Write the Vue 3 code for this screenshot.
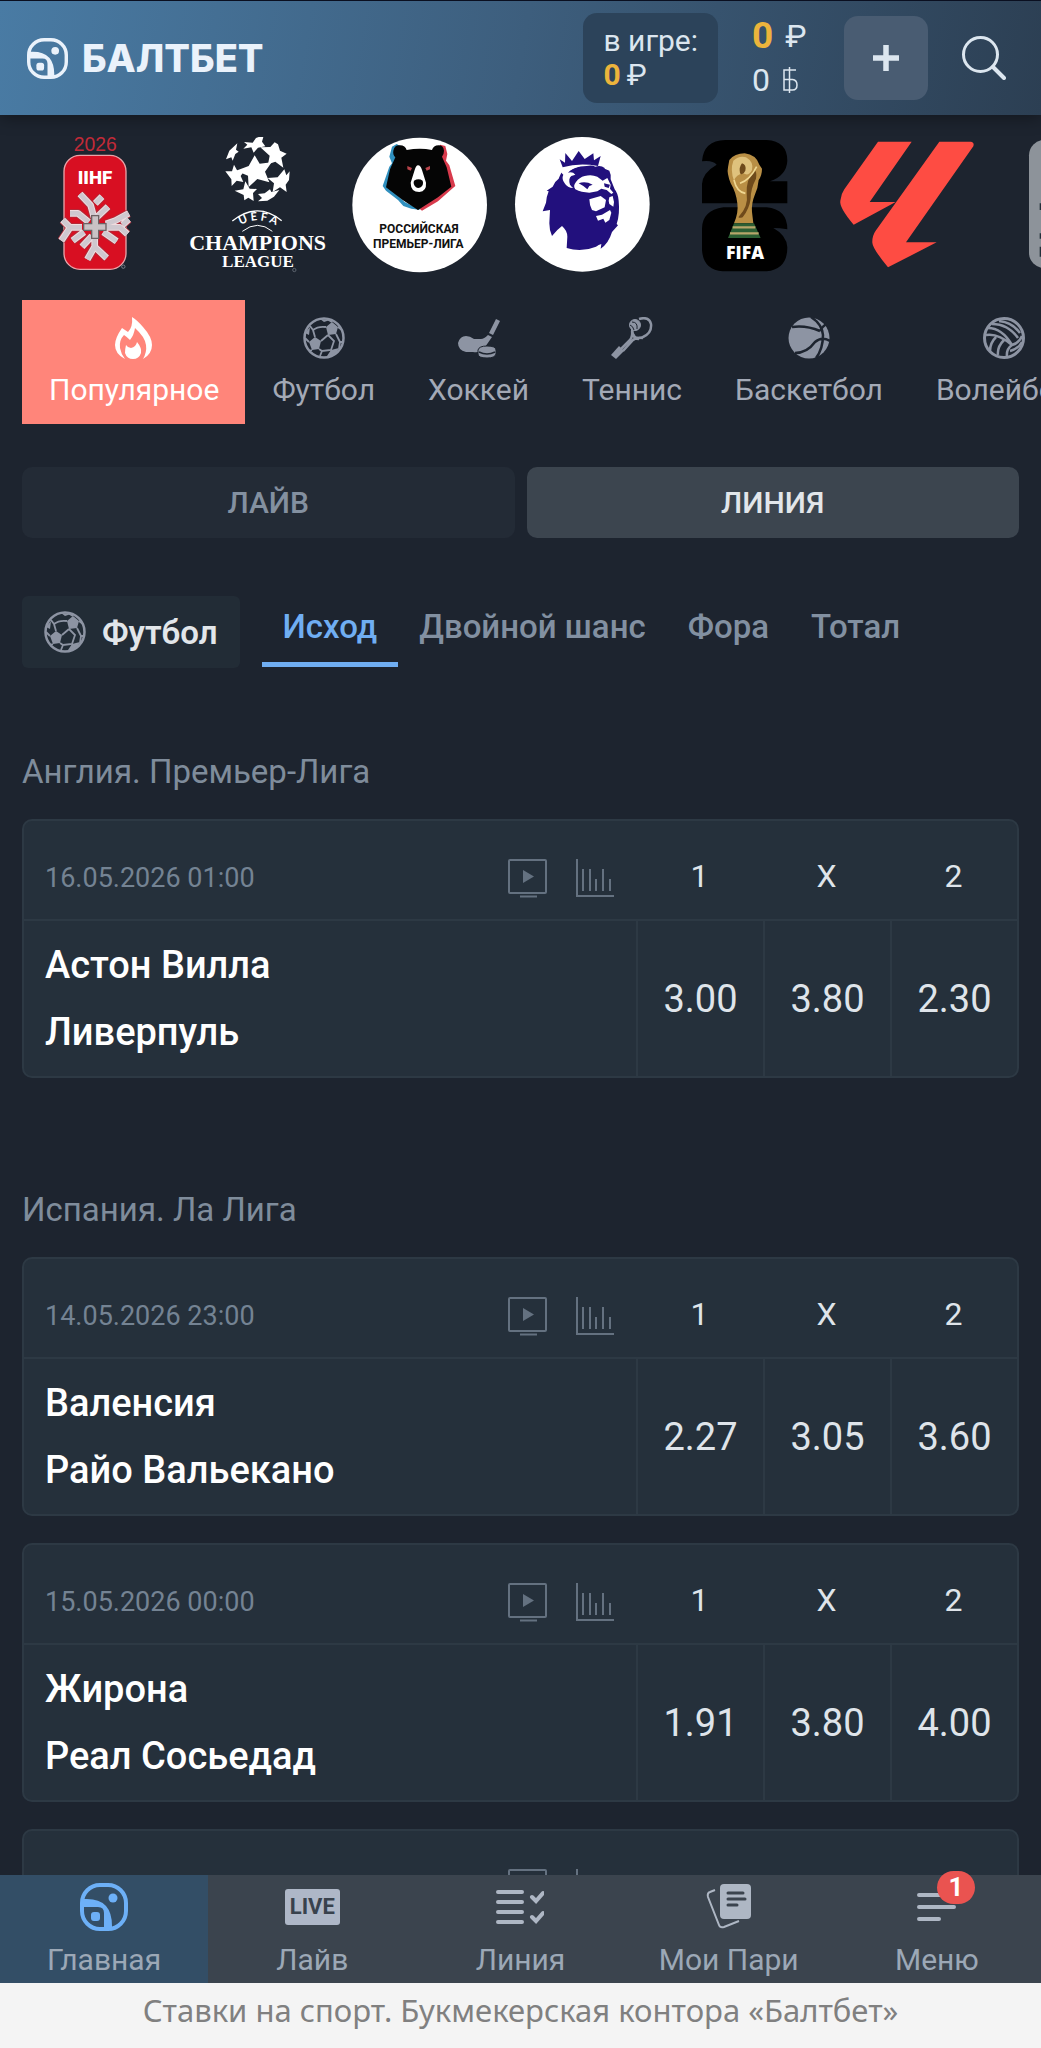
<template>
  <div class="app">
    <header class="header">
      <a href="#" class="brand">
        <svg class="brand-icon" viewBox="0 0 48 48">
          <use href="#balt-mark" />
        </svg>
        <span>БАЛТБЕТ</span>
      </a>
      <div class="in-play">
        <div>в игре:</div>
        <div class="in-play-sum"><b class="gold">0</b><span>₽</span></div>
      </div>
      <div class="balance">
        <div class="balance-row"><b class="gold">0</b><span>₽</span></div>
        <div class="balance-row">
          <span>0</span>
          <svg width="16" height="28" viewBox="0 0 16 28" fill="none" stroke="currentColor" stroke-width="1.500">
            <path d="M14 4H2v20h8.500q4.500 0 4.500-5t-4.500-5.500H2" />
            <path d="M7.500 1v26" />
          </svg>
        </div>
      </div>
      <button class="deposit" aria-label="Пополнить">
        <svg width="26" height="26" viewBox="0 0 26 26" stroke="currentColor" stroke-width="5.500">
          <path d="M13 0v26M0 13h26" />
        </svg>
      </button>
      <button class="search" aria-label="Поиск">
        <svg width="44" height="44" viewBox="0 0 44 44" fill="none" stroke="currentColor" stroke-width="3" stroke-linecap="round">
          <circle cx="18.500" cy="18.500" r="17" />
          <path d="M31 31l11 11" stroke-width="4" />
        </svg>
      </button>
    </header>

    <main class="content">
      <div class="leagues">
        <a href="#" class="league">
          <svg viewBox="84 51 405 408">
            <text x="286" y="94" font-size="58" font-weight="500" fill="#c22a38" text-anchor="middle" font-family="Liberation Sans, sans-serif">2026</text>
            <rect x="192" y="106" width="186" height="342" rx="48" fill="#d80f22" stroke="#e9a3a8" stroke-width="4" />
            <text x="285" y="191" font-size="56" font-weight="900" fill="#fff" text-anchor="middle" font-family="Roboto, sans-serif">IIHF</text>
            <defs>
              <path id="flake" d="M240 222l32 34 10 36M306 230l-20 20M210 280h24l32 26M324 260l-34 32M386 280l-40 22-28 10M188 300l22 22h36M184 362l24-36M382 342l-22-20h-44M386 298l-18 16M246 380l30-32M218 362l34-26M350 364l-40-28M284 350v30l-22 38M286 382l34 32" fill="none" stroke-linejoin="round" />
            </defs>
            <use href="#flake" stroke="#a83340" stroke-width="25" />
            <use href="#flake" stroke="#f0dcdf" stroke-width="20" />
            <use href="#flake" stroke="#cfc8cf" stroke-width="14" />
            <path d="M275 287h21v24h22v20h-22v24h-21v-24h-24v-20h24z" fill="#c9c2c5" stroke="#6d6264" stroke-width="4" />
            <circle cx="370" cy="440" r="5" fill="none" stroke="#777f8a" stroke-width="3" />
          </svg>
        </a>
        <a href="#" class="league">
          <svg viewBox="570 51 405 408">
            <g fill="#fff">
              <path d="M764 106l15 25 36-4-20 28 13 32-36-10-26 24-2-34-36-15 38-14z" />
              <path d="M732 66l26 2 10-14 8-3h14l-4 14 10 14-22 4-13 15-7-16-24 4 12-12z" />
              <path d="M781 82l30-1 13-14 10 6 6 19 20 9-16 12 6 30-24-18-22 8 5-26z" />
              <path d="M712 70l-24 22-10 26 16-6 4 10 8-20 10-7-8-6z" />
              <path d="M676 154l20 0 6-20 10 18 24-4-14 20 8 18-20-4-15 16-1-20z" />
              <path d="M803 174l30-2 20-24 6 18 10-12-2 26-10 14 3 22-20-14-22 14 4-26z" />
              <path d="M704 212l26-4 6-24 13 22 22 1-12 12 2 24-16-10-12 8-2-16z" />
              <path d="M774 222l20-2 16-12 4 8 24-6-16 20-20 12-28 2 12-10z" />
            </g>
            <path d="M697 303q75-60 148-1" fill="none" stroke="#fff" stroke-width="4" />
            <path d="M727 334q46-36 90 0" fill="none" stroke="#fff" stroke-width="3" />
            <path id="uefa-arc" d="M707 325q64-48 136 0" fill="none" />
            <text font-size="34" font-weight="700" fill="#fff" font-family="Lato, sans-serif">
              <textPath href="#uefa-arc" startOffset="50%" text-anchor="middle">U E F A</textPath>
            </text>
            <text x="773" y="389" font-size="66" font-weight="700" fill="#fff" text-anchor="middle" font-family="Liberation Serif, serif">CHAMPIONS</text>
            <text x="774" y="442" font-size="51" font-weight="700" fill="#fff" text-anchor="middle" font-family="Liberation Serif, serif">LEAGUE</text>
            <circle cx="883" cy="450" r="5" fill="none" stroke="#777f8a" stroke-width="2" />
          </svg>
        </a>
        <a href="#" class="league">
          <svg viewBox="36 51 405 408">
            <circle cx="239" cy="255" r="202" fill="#fff" />
            <path d="M156 80l14-8 14 8-8 60-32 60 50 46 48 24-28-4-24-8-16-18-36-28-10-14 20-58 8-10-8-20z" fill="#2f8fbe" />
            <path d="M300 74l16 4 6 24-4 20 10 14 18 62-14 12-38 34-48 28-10-8z" fill="#d83a4c" />
            <path d="M160 92q4-18 20-16 16 0 20 14 40-8 76 0 4-14 20-14 14 0 16 16 0 10-6 18l14 32 14 58-40 32-60 38-46-30-50-38 12-54 16-36q-8-8-6-20z" fill="#050505" />
            <path d="M234 136q8 0 12 14l12 38q2 26-20 28-26 0-26-28l12-38q4-14 10-14z" fill="#fff" />
            <path d="M222 182q14-8 26 0 4 12-6 20-8 4-14 0-10-10-6-20z" fill="#050505" />
            <path d="M202 138l14 6-4 8-10-4zM270 138l-14 6 4 8 10-4z" fill="#b8434a" />
            <text x="237" y="340" font-size="36" font-weight="700" fill="#111" text-anchor="middle" font-family="Roboto, sans-serif">РОССИЙСКАЯ</text>
            <text x="235" y="384" font-size="36" font-weight="700" fill="#111" text-anchor="middle" font-family="Roboto, sans-serif">ПРЕМЬЕР-ЛИГА</text>
          </svg>
        </a>
        <a href="#" class="league">
          <svg viewBox="522 51 405 408">
            <circle cx="727" cy="253" r="202" fill="#fff" />
            <path d="M668 142l-9-24 16 10 1-29 20 24 20-30 18 24 26-17 2 21 20-13-8 30q-58-10-106 4z" fill="#22107d" />
            <path d="M664 158q-6 12-8 18-12 8-18 24l-18 12 6 2q-8 20-8 34l-10 26 22-4-2 40q0 22 8 38 16-20 30-30 16 14 16 32l-2 34q44 14 88-4 8-6 16-8l-2 14q24-16 34-50l18-20-4-4q10-30 6-70-2-22-12-34l-12-30q2-14-4-26l-14-6 0-2q-12-10-28-4-10-6-26-2-40 0-62 22z" fill="#22107d" />
            <path d="M664 158q24-20 58-20-28 8-38 20 14-4 22 6l-12 4q-10 8-4 26 6 8 10 10-18 0-26-14-10-14-4-26z" fill="#fff" />
            <path d="M708 186q10-14 26-18 20-6 38 2l16 12 14-8 10 20-2 12 10 12-6 4-14-12-16-4-12 8-24 4q-24 0-42-10-8-10 2-22z" fill="#fff" />
            <path d="M716 190q20-8 42 4l-10 4-6 10-12-10zM792 190l18 4-4 10-12-4z" fill="#22107d" />
            <path d="M748 238l34-10 16 12-4 22-26 12-12-4q-8-16-8-32z" fill="#fff" />
            <path d="M808 232l10-4 4 18-2 14-12-8-2-10zM768 288l18-4 24-14 4 8-6 22-12 8-6-12-16 6z" fill="#fff" />
          </svg>
        </a>
        <a href="#" class="league">
          <svg viewBox="-12 51 405 408">
            <path d="M66 124q4-62 70-64h124q62 4 62 62-2 44-52 62h52v66H66v-58q2-34 44-58-12-14-44-10z" fill="#000" />
            <path d="M130 262h130q62 6 62 66-24-4-42-4 40 22 42 58 0 66-62 72H128q-58-4-62-64v-64q0-54 64-64z" fill="#000" />
            <path d="M148 120q16-20 46-20 34 4 44 34l8 12q0 20-10 34-2 26-12 46-10 24-8 50l4 34h-58q14-32 10-60-4-34-20-60-12-30-8-48z" fill="#b98f45" />
            <path d="M160 122q18-16 38-10 24 14 18 38-10 20-26 10-22 4-28 22-12-32-2-60z" fill="#dfc27d" />
            <path d="M186 130q14 4 10 22-8 16-16 8-4-18 6-30zM222 150q10 4 6 26-16 30-16 60-4 30-24 56-14 4-12-2 30-30 24-70-2-40 22-70z" fill="#6e4a1b" />
            <path d="M162 180q8 36 34 40M230 140q-20 40-50 50" fill="none" stroke="#f0d893" stroke-width="5" />
            <path d="M162 310h60l20 44h-98z" fill="#2c5f34" />
            <path d="M158 322h68M150 340h86" stroke="#b7a66a" stroke-width="7" />
            <text x="195" y="416" font-size="53" font-weight="800" fill="#fff" text-anchor="middle" font-family="Open Sans, sans-serif">FIFA</text>
          </svg>
        </a>
        <a href="#" class="league">
          <svg viewBox="474 51 405 408">
            <path d="M594 65h101L569 246h78L521 314q-44-52-40-72 2-20 12-34z" fill="#fe4c43" />
            <path d="M778 65h94q12 2 8 14L678 367h92L624 442q-46-56-47-74-1-20 10-36z" fill="#fe4c43" />
          </svg>
        </a>
        <a href="#" class="league">
          <svg viewBox="960 51 405 408">
            <rect x="1047" y="60" width="260" height="384" rx="46" fill="#8d939a" />
            <path d="M1083 250v20M1083 340v16M1083 380v30" stroke="#22303b" stroke-width="8" />
          </svg>
        </a>
      </div>

      <nav class="sports">
        <button v-for="s in sports" :key="s.name" class="sport" :class="{ active: s.name === sport }" @click="sport = s.name">
          <svg width="42" height="42" viewBox="0 0 42 42"><use :href="'#' + s.icon" /></svg>
          <span>{{ s.name }}</span>
        </button>
      </nav>

      <div class="modes">
        <button v-for="m in modes" :key="m" class="mode" :class="{ active: m === mode }" @click="mode = m">{{ m }}</button>
      </div>

      <div class="markets">
        <button class="chip">
          <svg width="42" height="42" viewBox="0 0 42 42"><use href="#football" /></svg>
          <span>Футбол</span>
        </button>
        <button v-for="m in markets" :key="m" class="market" :class="{ active: m === market }" @click="market = m">{{ m }}</button>
      </div>

      <section v-for="t in tournaments" :key="t.name" class="tournament">
        <h2>{{ t.name }}</h2>
        <table v-for="(match, i) in t.matches" :key="i" class="match">
          <thead>
            <tr>
              <th class="info">
                <div class="info-row">
                  <time>{{ match.date }}</time>
                  <svg width="39" height="39" viewBox="0 0 39 39" fill="none" stroke="currentColor" stroke-width="2">
                    <rect x="1" y="1" width="37" height="33" rx="1" />
                    <path d="M12 37.500h17" />
                    <path d="M15 11l11 6.500L15 24z" fill="currentColor" stroke="none" />
                  </svg>
                  <svg width="39" height="39" viewBox="0 0 39 39" fill="none" stroke="currentColor" stroke-width="2">
                    <path d="M2 0v37h37" />
                    <path d="M8 10v22M15 10v22M21 20v12M28 10v22M35 20v12" />
                  </svg>
                </div>
              </th>
              <th v-for="o in outcomes" :key="o" class="outcome">{{ o }}</th>
            </tr>
          </thead>
          <tbody>
            <tr>
              <td class="teams">
                <div v-for="team in match.teams" :key="team">{{ team }}</div>
              </td>
              <td v-for="(odd, k) in match.odds" :key="k" class="odd">
                <button>{{ odd }}</button>
              </td>
            </tr>
          </tbody>
        </table>
      </section>
    </main>

    <nav class="tabbar">
      <a href="#" class="tab active">
        <svg width="48" height="48" viewBox="0 0 48 48" class="mark"><use href="#balt-mark" /></svg>
        <span>Главная</span>
      </a>
      <a href="#" class="tab">
        <span class="tab-icon"><span class="live">LIVE</span></span>
        <span>Лайв</span>
      </a>
      <a href="#" class="tab">
        <svg width="48" height="48" viewBox="0 0 48 48" fill="none" stroke="currentColor" stroke-width="4" stroke-linecap="round">
          <path d="M2 9h24M2 19h24M2 29h24M2 39h24" />
          <path d="M36 14l4 4 7-8M36 34l4 4 7-8" />
        </svg>
        <span>Линия</span>
      </a>
      <a href="#" class="tab">
        <svg width="48" height="48" viewBox="0 0 48 48">
          <path d="M10 7L5 9q-3 1-2 5l11 28q1 3 5 2l15-6" fill="none" stroke="currentColor" stroke-width="2" />
          <rect x="15" y="1" width="31" height="35" rx="4" fill="currentColor" />
          <path d="M23 10h15M23 16h17M23 22h9" stroke="#3b444e" stroke-width="3" stroke-linecap="round" />
        </svg>
        <span>Мои Пари</span>
      </a>
      <a href="#" class="tab">
        <span class="tab-icon">
          <svg width="48" height="48" viewBox="0 0 48 48" stroke="currentColor" stroke-width="4" stroke-linecap="round">
            <path d="M6 12h34M6 24h35M6 36h20" />
          </svg>
          <span class="badge">1</span>
        </span>
        <span>Меню</span>
      </a>
    </nav>

    <footer class="caption">Ставки на спорт. Букмекерская контора «Балтбет»</footer>

    <!-- shared icon shapes -->
    <svg class="sprite" width="0" height="0">
      <symbol id="balt-mark" viewBox="0 0 48 48">
        <rect x="2" y="2" width="44" height="44" rx="18" fill="none" stroke="currentColor" stroke-width="4" />
        <path d="M2 16h5q25 0 25 27v3h-8V30q0-6-6-6H2z" fill="currentColor" />
        <rect x="11" y="29" width="9" height="9" rx="3" fill="currentColor" />
        <circle cx="33" cy="15" r="4.500" fill="currentColor" />
      </symbol>
      <symbol id="fire" viewBox="0 0 42 42">
        <path d="M19 0q5 3 11 10 9 10 9 18 0 9-9 14 4-7 3-14-1-8-11-17-1 7-5 12-3-3-6-5-5 5-4 13 1 6 5 11Q2 37 2 28q0-7 7-17 3 2 6 4 5-5 4-15z" fill="currentColor" />
        <path d="M13 28q2 3 5 3 5-1 6-6 5 6 4 11-2 6-8 6t-8-6q0-4 1-8z" fill="currentColor" />
      </symbol>
      <symbol id="football" viewBox="0 0 42 42">
        <circle cx="21" cy="21" r="19.500" fill="none" stroke="currentColor" stroke-width="2.500" />
        <path d="M23 10l6-5 6 5-2 7-8 1zM6 25l6-5 6 4-2 8-7 1zM24 39l4-6 8-2-2 4-6 4zM17 2l10 1-6 2zM2 16l5-6-1 8z" fill="currentColor" />
        <path d="M23 10q-8-1-13 3l2 7M10 13L7 9M29 5l-5-3M18 24l7-6M33 17l4 8-1 7M25 18l6 6-3 9-9 1-3-2M35 10l4 3M19 34l-2 5M9 33l-3 1M37 25h3M6 25l-4-4" fill="none" stroke="currentColor" stroke-width="1.800" />
      </symbol>
      <symbol id="hockey" viewBox="0 0 42 42">
        <path d="M38 2l4 2-7 14-4-2zM30 18l4 2-9 13q-4 3-10 2H8Q0 33 0 26q2-7 8-7 4 0 8 3h7q3 0 7-4z" fill="currentColor" />
        <path d="M20 33q1-4 9-4 9 0 9 4v4q-1 4-9 4-9 0-9-4z" fill="currentColor" stroke="#1d242f" />
        <path d="M21 35q8 4 16 0" fill="none" stroke="#1d242f" stroke-width="1.500" />
      </symbol>
      <symbol id="tennis" viewBox="0 0 42 42">
        <path d="M28 2q10-3 12 5 1 9-8 13-6 3-9-1-3-4-1-9" fill="none" stroke="currentColor" stroke-width="2.500" />
        <path d="M21 14q1 5-2 9L9 33M32 21q-7-1-10 2L12 34M22 17q1 5 6 5" fill="none" stroke="currentColor" stroke-width="2.500" />
        <path d="M8 29l5 5-8 8-5-4z" fill="currentColor" />
        <circle cx="24" cy="8" r="5.500" fill="currentColor" stroke="currentColor" />
        <path d="M21 5q6 0 5 7M19 8q3 1 4 5" fill="none" stroke="#1d242f" stroke-width="1" />
      </symbol>
      <symbol id="basketball" viewBox="0 0 42 42">
        <circle cx="21" cy="21" r="20.500" fill="currentColor" />
        <path d="M4 10q14-2 28 4M23 0q11 7 12 18 0 14-7 23M42 24q-8-5-15 1-8 11-20 11M32 14q3-5 6-7" fill="none" stroke="#1d242f" stroke-width="2.500" />
      </symbol>
      <symbol id="volleyball" viewBox="0 0 42 42">
        <g fill="none" stroke="currentColor" stroke-width="3">
          <circle cx="21" cy="21" r="19.500" />
          <path d="M5 11q14 0 24 17M9 7q16 0 26 14M16 4q13 1 21 12M3 18q12-2 26 10-6 4-5 12M7 34q0-8 6-14M15 38q-1-8 6-15M27 34q8-2 12-9M29 28q7-2 10-9" stroke-width="2.500" />
        </g>
      </symbol>
    </svg>
  </div>
</template>

<script setup>
import { ref } from 'vue';

const sport = ref('Популярное');
const mode = ref('ЛИНИЯ');
const market = ref('Исход');

const sports = [
  { name: 'Популярное', icon: 'fire' },
  { name: 'Футбол', icon: 'football' },
  { name: 'Хоккей', icon: 'hockey' },
  { name: 'Теннис', icon: 'tennis' },
  { name: 'Баскетбол', icon: 'basketball' },
  { name: 'Волейбол', icon: 'volleyball' }
];

const modes = ['ЛАЙВ', 'ЛИНИЯ'];
const markets = ['Исход', 'Двойной шанс', 'Фора', 'Тотал'];
const outcomes = ['1', 'X', '2'];

const tournaments = [
  {
    name: 'Англия. Премьер-Лига',
    matches: [
      { date: '16.05.2026 01:00', teams: ['Астон Вилла', 'Ливерпуль'], odds: ['3.00', '3.80', '2.30'] }
    ]
  },
  {
    name: 'Испания. Ла Лига',
    matches: [
      { date: '14.05.2026 23:00', teams: ['Валенсия', 'Райо Вальекано'], odds: ['2.27', '3.05', '3.60'] },
      { date: '15.05.2026 00:00', teams: ['Жирона', 'Реал Сосьедад'], odds: ['1.91', '3.80', '4.00'] },
      { date: '', teams: [], odds: ['', '', ''] }
    ]
  }
];
</script>

<style>
body {
  background: #1d242f;
}
</style>

<style scoped>
.app {
  display: flex;
  flex-direction: column;
  height: 100vh;
  overflow: hidden;
  background: #1d242f;
  color: #dfe4ea;
  font-family: Roboto, "Liberation Sans", sans-serif;
}

button {
  border: none;
  background: none;
  padding: 0;
  color: inherit;
  font: inherit;
  cursor: pointer;
}

a {
  color: inherit;
  text-decoration: none;
}

svg {
  display: block;
  flex-shrink: 0;
}

.sprite {
  position: absolute;
}

/* Header */
.header {
  position: relative;
  display: flex;
  align-items: center;
  gap: 34px;
  box-sizing: border-box;
  height: 115px;
  flex-shrink: 0;
  padding: 0 35px 0 27px;
  border-top: 1px solid #0a0f20;
  background: linear-gradient(100deg, #497ba4 0%, #3d5e7d 50%, #2c3f53 100%);
  box-shadow: 0 2px 16px rgba(0, 0, 0, 0.4);
  color: #dce6ef;
  font-size: 32px;
  line-height: 34px;
}

.brand {
  display: flex;
  align-items: center;
  gap: 14px;
  margin-right: auto;
  color: #eaf2fb;
  font-family: Inter, sans-serif;
  font-size: 38px;
  font-weight: 800;
}

.brand-icon {
  width: 41px;
  height: 41px;
}

.in-play {
  padding: 11px 20px;
  border-radius: 14px;
  background: #2c435a;
  font-size: 30px;
}

.in-play-sum {
  display: flex;
  gap: 6px;
}

.gold {
  color: #ecb43c;
}

.balance {
  width: 58px;
}

.balance-row {
  display: flex;
  align-items: center;
  gap: 12px;
  height: 44px;
}

.balance-row .gold {
  font-size: 37px;
}

.deposit {
  display: flex;
  align-items: center;
  justify-content: center;
  width: 84px;
  height: 84px;
  border-radius: 14px;
  background: #495c72;
}

/* Content */
.content {
  flex: 1;
  min-height: 0;
  overflow: hidden;
  padding: 0 22px;
}

.leagues {
  display: flex;
  gap: 27px;
  margin: 0 -22px 27px;
  padding: 22px 0 0 28px;
  overflow: hidden;
}

.league {
  flex: none;
}

.league svg {
  width: 135px;
  height: 136px;
  overflow: visible;
}

.sports {
  display: flex;
  margin-right: -22px;
  overflow: hidden;
}

.sport {
  display: flex;
  flex: none;
  flex-direction: column;
  align-items: center;
  gap: 11px;
  height: 124px;
  padding: 17px 26px 0 27px;
  color: #8d94a3;
  font-size: 30px;
  line-height: 40px;
}

.sport span {
  color: #a3a9b6;
}

.sport.active,
.sport.active span {
  background: #ff857a;
  color: #fff;
}

.modes {
  display: grid;
  grid-template-columns: 1fr 1fr;
  gap: 12px;
  margin-top: 43px;
}

.mode {
  height: 71px;
  border-radius: 10px;
  background: #232b36;
  color: #8390a0;
  font-size: 30px;
  font-weight: 500;
}

.mode.active {
  background: #3c454f;
  color: #e2e6ea;
}

.markets {
  display: flex;
  margin-top: 58px;
  font-size: 33px;
}

.chip {
  display: flex;
  align-items: center;
  gap: 16px;
  height: 72px;
  margin-right: 22px;
  padding: 0 22px;
  border-radius: 6px;
  background: #222c36;
  color: #8d94a3;
}

.chip span {
  color: #e2e6ea;
  font-weight: 600;
}

.market {
  height: 71px;
  padding: 0 21px 6px;
  border-bottom: 5px solid transparent;
  color: #8290a1;
  font-weight: 500;
}

.market.active {
  border-color: #70aef2;
  color: #70aef2;
}

/* Matches */
.tournament {
  margin-top: 112px;
}

.markets + .tournament {
  margin-top: 84px;
}

h2 {
  margin: 0 0 27px;
  color: #7f8c9b;
  font-size: 33px;
  font-weight: 400;
  line-height: 40px;
}

.match {
  width: 100%;
  table-layout: fixed;
  border: 2px solid #2d3944;
  border-radius: 10px;
  border-spacing: 0;
  background: #25303b;
}

.match + .match {
  margin-top: 27px;
}

th,
td {
  box-sizing: border-box;
  padding: 0;
}

th {
  height: 98px;
  padding-top: 12px;
  font-weight: 400;
}

.outcome {
  width: 127px;
  font-size: 32px;
}

.info-row {
  display: flex;
  align-items: center;
  gap: 28px;
  padding: 4px 22px 0 21px;
  color: #647180;
}

time {
  margin-right: auto;
  color: #748393;
  font-size: 27px;
}

td {
  height: 157px;
  border-top: 2px solid #2d3944;
}

.teams {
  padding-left: 21px;
  color: #fff;
  font-size: 38px;
  font-weight: 500;
  line-height: 67px;
}

.odd {
  border-left: 2px solid #2d3944;
}

.odd button {
  display: block;
  width: 100%;
  height: 100%;
  font-size: 38px;
}

/* Bottom bar */
.tabbar {
  position: relative;
  display: grid;
  grid-template-columns: repeat(5, 1fr);
  height: 108px;
  flex-shrink: 0;
  background: #3b444e;
}

.tab {
  display: flex;
  flex-direction: column;
  align-items: center;
  gap: 9px;
  padding-top: 8px;
  color: #aeb7c4;
  font-size: 30px;
  line-height: 40px;
}

.tab > span:last-child {
  color: #9ca8b6;
}

.tab.active {
  background: #334e66;
}

.mark {
  color: #6db0f7;
}

.tab-icon {
  position: relative;
  display: flex;
  align-items: center;
  height: 48px;
}

.live {
  padding: 0 5px;
  border-radius: 3px;
  background: #aeb7c7;
  color: #39424d;
  font-size: 22px;
  font-weight: 700;
  line-height: 36px;
}

.badge {
  position: absolute;
  top: -12px;
  right: -14px;
  width: 38px;
  border-radius: 17px;
  background: #ea5350;
  color: #fff;
  font-size: 26px;
  font-weight: 700;
  line-height: 33px;
  text-align: center;
}

.caption {
  flex-shrink: 0;
  height: 65px;
  background: #f4f4f4;
  color: #808080;
  font-family: "Noto Sans", sans-serif;
  font-size: 31px;
  line-height: 55px;
  text-align: center;
  white-space: nowrap;
}
</style>
